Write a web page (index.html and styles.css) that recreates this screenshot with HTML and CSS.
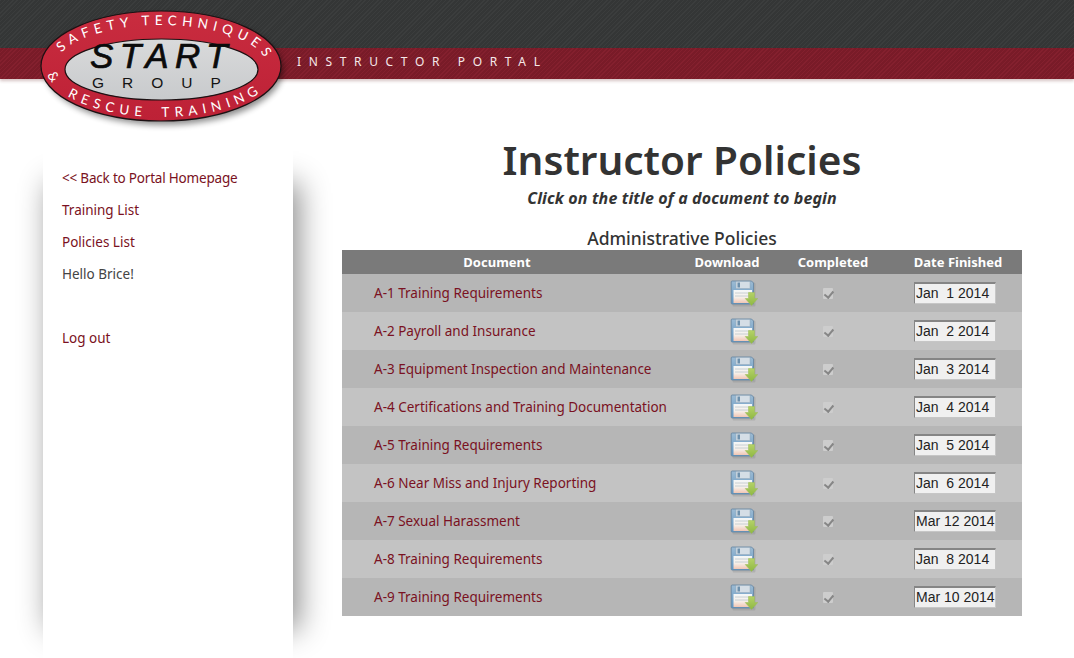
FILE: index.html
```html
<!DOCTYPE html>
<html lang="en">
<head>
<meta charset="utf-8">
<title>Instructor Policies</title>
<link rel="stylesheet" href="styles.css">
</head>
<body>
<svg width="0" height="0" class="defs">
  <defs>
    <linearGradient id="disk" x1="0" y1="0" x2="0" y2="1"><stop offset="0" stop-color="#9dbbd3"/><stop offset="1" stop-color="#5f96c4"/></linearGradient>
    <linearGradient id="arrow" x1="0" y1="0" x2="0" y2="1"><stop offset="0" stop-color="#b4d267"/><stop offset="1" stop-color="#8fb843"/></linearGradient>
    <linearGradient id="paper" x1="0" y1="0" x2="0" y2="1"><stop offset="0" stop-color="#f4f7f8"/><stop offset=".55" stop-color="#f6f0ea"/><stop offset="1" stop-color="#f1c6b4"/></linearGradient>
    <symbol id="save" viewBox="0 0 28 28">
      <rect x="2.500" y="3.500" width="23" height="24" rx="1.500" fill="#777" opacity=".25"/>
      <path d="M2.200 2h19.300l2 2v21H2.200q-1 0-1-1V3q0-1 1-1z" fill="url(#disk)" stroke="#6a88a3" stroke-width=".9"/>
      <rect x="6" y="2.500" width="14" height="7" fill="#d5dee6" stroke="#93a8b9" stroke-width=".5"/>
      <rect x="7.500" y="3.500" width="2.500" height="5" fill="#6d90ac"/>
      <rect x="3.500" y="11" width="18.500" height="13" fill="url(#paper)"/>
      <path d="M5 14h15.500M5 17h15.500" stroke="#bcc6cc" stroke-width=".8"/>
      <path d="M18.500 13.500h6v6h3.300l-6.300 7-6.300-7h3.300z" fill="url(#arrow)" stroke="#9dbd58" stroke-width=".5"/>
    </symbol>
  </defs>
</svg>

<header class="masthead">
  <div class="band-dark"></div>
  <div class="band-red"><span class="portal">INSTRUCTOR PORTAL</span></div>
  <svg class="logo" width="256" height="130" viewBox="0 0 256 130">
    <defs>
      <filter id="soft" x="-10%" y="-10%" width="120%" height="130%"><feGaussianBlur stdDeviation="3"/></filter>
      <linearGradient id="ring" x1="0" y1="0" x2="0" y2="1"><stop offset="0" stop-color="#c92c3f"/><stop offset="1" stop-color="#bd2136"/></linearGradient>
      <linearGradient id="face" x1="0" y1="0" x2="0" y2="1"><stop offset="0" stop-color="#d9dadb"/><stop offset="1" stop-color="#c8cacc"/></linearGradient>
      <path id="arcTop" d="M15 60 A106 42 0 0 1 227 60"/>
      <path id="arcBottom" d="M6 60 A115 50 0 0 0 236 60"/>
    </defs>
    <ellipse cx="124" cy="63" rx="119" ry="55" fill="#000" opacity=".45" filter="url(#soft)"/>
    <ellipse cx="121" cy="59" rx="120" ry="55" fill="url(#ring)" stroke="#1c1113" stroke-width="1.200"/>
    <ellipse cx="121.500" cy="62.500" rx="96.500" ry="30.500" fill="url(#face)" stroke="#1c1113" stroke-width="1.200"/>
    <text class="ring-text"><textPath href="#arcTop" startOffset="16">SAFETY TECHNIQUES</textPath></text>
    <text class="ring-text ring-low"><textPath href="#arcBottom" startOffset="8">&amp; RESCUE TRAINING</textPath></text>
    <text class="start" x="50" y="61">START</text>
    <text class="group" x="52" y="81">GROUP</text>
  </svg>
</header>

<div class="page">
  <nav class="sidebar">
    <a href="#" class="back">&lt;&lt; Back to Portal Homepage</a>
    <a href="#">Training List</a>
    <a href="#">Policies List</a>
    <span>Hello Brice!</span>
    <a href="#" class="logout">Log out</a>
  </nav>

  <main class="content">
    <h1>Instructor Policies</h1>
    <p class="lede">Click on the title of a document to begin</p>
    <h2>Administrative Policies</h2>
    <table class="docs">
      <thead>
        <tr><th class="c-doc">Document</th><th class="c-dl">Download</th><th class="c-done">Completed</th><th class="c-date">Date Finished</th></tr>
      </thead>
      <tbody>
        <tr><td class="c-name"><a href="#">A-1 Training Requirements</a></td><td class="c-dl"><svg class="save"><use href="#save"/></svg></td><td class="c-done"><span class="check"></span></td><td class="c-date"><input class="date" readonly value="Jan  1 2014"></td></tr>
        <tr><td class="c-name"><a href="#">A-2 Payroll and Insurance</a></td><td class="c-dl"><svg class="save"><use href="#save"/></svg></td><td class="c-done"><span class="check"></span></td><td class="c-date"><input class="date" readonly value="Jan  2 2014"></td></tr>
        <tr><td class="c-name"><a href="#">A-3 Equipment Inspection and Maintenance</a></td><td class="c-dl"><svg class="save"><use href="#save"/></svg></td><td class="c-done"><span class="check"></span></td><td class="c-date"><input class="date" readonly value="Jan  3 2014"></td></tr>
        <tr><td class="c-name"><a href="#">A-4 Certifications and Training Documentation</a></td><td class="c-dl"><svg class="save"><use href="#save"/></svg></td><td class="c-done"><span class="check"></span></td><td class="c-date"><input class="date" readonly value="Jan  4 2014"></td></tr>
        <tr><td class="c-name"><a href="#">A-5 Training Requirements</a></td><td class="c-dl"><svg class="save"><use href="#save"/></svg></td><td class="c-done"><span class="check"></span></td><td class="c-date"><input class="date" readonly value="Jan  5 2014"></td></tr>
        <tr><td class="c-name"><a href="#">A-6 Near Miss and Injury Reporting</a></td><td class="c-dl"><svg class="save"><use href="#save"/></svg></td><td class="c-done"><span class="check"></span></td><td class="c-date"><input class="date" readonly value="Jan  6 2014"></td></tr>
        <tr><td class="c-name"><a href="#">A-7 Sexual Harassment</a></td><td class="c-dl"><svg class="save"><use href="#save"/></svg></td><td class="c-done"><span class="check"></span></td><td class="c-date"><input class="date" readonly value="Mar 12 2014"></td></tr>
        <tr><td class="c-name"><a href="#">A-8 Training Requirements</a></td><td class="c-dl"><svg class="save"><use href="#save"/></svg></td><td class="c-done"><span class="check"></span></td><td class="c-date"><input class="date" readonly value="Jan  8 2014"></td></tr>
        <tr><td class="c-name"><a href="#">A-9 Training Requirements</a></td><td class="c-dl"><svg class="save"><use href="#save"/></svg></td><td class="c-done"><span class="check"></span></td><td class="c-date"><input class="date" readonly value="Mar 10 2014"></td></tr>
      </tbody>
    </table>
  </main>
</div>
</body>
</html>
```

FILE: styles.css
```css
* { box-sizing: border-box; }
html, body { height: 100%; }
body {
  margin: 0;
  background: #fff;
  overflow: hidden;
  font-family: "Noto Sans", "DejaVu Sans", sans-serif;
  color: #333;
}
.defs { position: absolute; }

.masthead { position: relative; height: 145px; }
.band-dark {
  height: 48px;
  background-color: #383a3a;
  background-image: repeating-linear-gradient(135deg, #3b3d3d 0 1px, #343636 1px 3px);
}
.band-red {
  height: 31px;
  display: flex;
  align-items: center;
  padding-left: 297px;
  background-color: #7d1c2a;
  background-image: repeating-linear-gradient(135deg, #84202e 0 1px, #791b28 1px 3px);
  box-shadow: 0 2px 3px rgba(120, 60, 60, .3);
}
.portal {
  font-size: 12px;
  letter-spacing: 7.65px;
  color: #f6e8e8;
  position: relative;
  top: -2px;
}
.logo { position: absolute; left: 40px; top: 7px; }
.ring-text {
  font-family: "Lato", sans-serif;
  font-size: 13.500px;
  fill: #fff;
  letter-spacing: 5.1px;
}
.ring-low { letter-spacing: 5.4px; word-spacing: 6px; }
.start {
  font-family: "Liberation Sans", sans-serif;
  font-style: italic;
  font-size: 35px;
  letter-spacing: 6.5px;
  fill: #0b0b0b;
  stroke: #0b0b0b;
  stroke-width: .7px;
}
.group {
  font-family: "Liberation Sans", sans-serif;
  font-size: 15.500px;
  letter-spacing: 18px;
  fill: #141414;
}

.page { display: flex; align-items: flex-start; padding-left: 43px; }
.sidebar {
  position: relative;
  flex: none;
  width: 250px;
  height: 513px;
  padding: 17px 0 0 19px;
  display: flex;
  flex-direction: column;
  background: #fff;
  font-size: 13.500px;
  line-height: 32px;
}
.sidebar::before {
  content: "";
  position: absolute;
  z-index: -1;
  left: 0;
  right: 0;
  top: 38px;
  height: 447px;
  box-shadow: 6px 0 28px rgba(0, 0, 0, .45);
}
.sidebar a { color: #7a1122; text-decoration: none; }
.sidebar .back { letter-spacing: -.2px; }
.sidebar span { color: #444; }
.sidebar .logout { margin-top: 32px; }

.content { flex: none; width: 680px; margin-left: 49px; text-align: center; }
h1 {
  margin: 0;
  height: 43px;
  font-size: 40.500px;
  line-height: 30px;
  font-weight: 600;
  color: #333;
}
.lede {
  margin: 0;
  font-size: 16px;
  line-height: 20px;
  font-style: italic;
  font-weight: 700;
  letter-spacing: .13px;
  color: #333;
}
h2 {
  margin: 20px 0 0;
  height: 22px;
  font-size: 17.500px;
  line-height: 21px;
  font-weight: 500;
  color: #333;
}
.docs { width: 680px; table-layout: fixed; border-collapse: collapse; }
.docs th {
  height: 24px;
  padding: 0;
  background: #7a7a7a;
  color: #fff;
  font-size: 13px;
  font-weight: 700;
}
.docs td { height: 38px; padding: 0; text-align: center; vertical-align: middle; }
.docs tbody tr:nth-child(odd) { background: #b6b6b6; }
.docs tbody tr:nth-child(even) { background: #c3c3c3; }
.c-doc { width: 340px; padding-right: 30px !important; }
.c-dl { width: 90px; }
.c-done { width: 122px; }
.c-date { width: 128px; }
.docs td.c-name { text-align: left; padding-left: 32px; font-size: 13.500px; }
.c-name a { color: #7a1122; text-decoration: none; }
.save { display: block; width: 28px; height: 28px; margin: 0 0 0 48px; }
.check {
  display: block;
  width: 10px;
  height: 11px;
  margin-left: 51px;
  border-radius: 1px;
  background: #cdcdcd;
  position: relative;
}
.check::after {
  content: "";
  position: absolute;
  left: 3px;
  top: 1px;
  width: 3.500px;
  height: 7px;
  border: solid #868686;
  border-width: 0 2px 2px 0;
  transform: rotate(40deg);
}
.date {
  display: block;
  width: 82px;
  height: 22px;
  margin-left: 20px;
  padding: 0 0 1px 1px;
  font-family: "Liberation Sans", sans-serif;
  font-size: 14px;
  color: #222;
  background: #f0f0f0;
  border-style: solid;
  border-width: 2px 1px 1px 1px;
  border-color: #858585 #c6c6c6 #c6c6c6 #858585;
  outline: none;
}
```
